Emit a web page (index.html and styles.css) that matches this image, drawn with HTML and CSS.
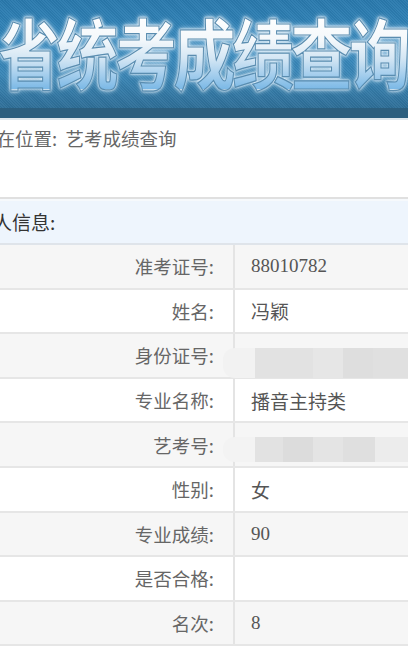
FILE: index.html
```html
<!DOCTYPE html>
<html lang="zh">
<head>
<meta charset="utf-8">
<title>省统考成绩查询</title>
<link rel="stylesheet" href="styles.css">
</head>
<body>
<div class="page">
  <header class="banner">
    <div class="title"><span class="title-text">省统考成绩查询</span></div>
  </header>
  <div class="crumb"><span class="crumb-text">所在位置:&nbsp; 艺考成绩查询</span></div>
  <div class="section-head"><span class="section-text">个人信息:</span></div>
  <div class="rows">
    <div class="row odd"><div class="label">准考证号:</div><div class="value num">88010782</div></div>
    <div class="row"><div class="label">姓名:</div><div class="value">冯颖</div></div>
    <div class="row odd"><div class="label">身份证号:</div><div class="value"><div class="mask mask-id"></div></div></div>
    <div class="row"><div class="label">专业名称:</div><div class="value">播音主持类</div></div>
    <div class="row odd"><div class="label">艺考号:</div><div class="value"><div class="mask mask-yk"></div></div></div>
    <div class="row"><div class="label">性别:</div><div class="value">女</div></div>
    <div class="row odd"><div class="label">专业成绩:</div><div class="value num">90</div></div>
    <div class="row"><div class="label">是否合格:</div><div class="value"></div></div>
    <div class="row odd"><div class="label">名次:</div><div class="value num">8</div></div>
  </div>
</div>
</body>
</html>
```
FILE: styles.css
```css
html, body {
  margin: 0;
  padding: 0;
  background: #fff;
}
.page {
  width: 408px;
  height: 647px;
  overflow: hidden;
  font-family: "Noto Sans CJK SC", "Noto Sans", sans-serif;
}
.banner {
  height: 108px;
  background:
    repeating-linear-gradient(45deg, rgba(255,255,255,0.04) 0 1px, rgba(0,0,0,0.04) 1px 2px),
    linear-gradient(180deg, #2a7aae 0%, #3588bd 45%, #3a86b6 70%, #2f6f98 100%);
  border-bottom: 10px solid #2c5f7f;
  box-shadow: 0 2px 0 #dfe8ee;
  overflow: hidden;
}
.title {
  white-space: nowrap;
  height: 108px;
  display: flex;
  align-items: center;
}
.title-text {
  display: inline-block;
  font-family: "Noto Sans CJK SC", sans-serif;
  font-weight: 700;
  font-size: 62px;
  letter-spacing: -3.5px;
  line-height: 1;
  margin-left: -2px;
  margin-top: -6px;
  transform: scale(1, 1.24);
  transform-origin: center;
  background: linear-gradient(180deg, #ffffff 0%, #f4f8fb 35%, #d3e6f4 60%, #7ab8e6 100%);
  -webkit-background-clip: text;
  background-clip: text;
  color: transparent;
  -webkit-text-stroke: 1px #5a8db0;
  filter: drop-shadow(0 0 1px #e8f3fb) drop-shadow(0 0 2px rgba(220,238,250,0.8));
}
.crumb {
  height: 81px;
  box-sizing: border-box;
  padding-top: 9px;
  border-bottom: 2px solid #e0e0e0;
}
.crumb-text {
  display: block;
  margin-left: -22px;
  font-size: 18.5px;
  line-height: 22px;
  color: #666;
  white-space: nowrap;
}
.section-head {
  background: #eef5fd;
  border-top: 2px solid #f6f9fc;
  box-sizing: border-box;
  border-bottom: 2px solid #dfe4ea;
  display: flex;
  align-items: center;
  height: 46px;
}
.section-text {
  display: block;
  margin-left: -26px;
  font-size: 19px;
  color: #333;
  white-space: nowrap;
  margin-top: -2px;
}
.rows {
  display: flex;
  flex-direction: column;
}
.row {
  display: grid;
  grid-template-columns: 235px 1fr;
  height: 44.6px;
  box-sizing: border-box;
  border-bottom: 2px solid #e6e6e6;
  background: #fff;
}
.row.odd {
  background: #f6f6f6;
}
.label {
  display: flex;
  align-items: center;
  justify-content: flex-end;
  padding-right: 19px;
  font-size: 18.5px;
  color: #666;
  border-right: 2px solid #e4e4e4;
  white-space: nowrap;
}
.value {
  position: relative;
  display: flex;
  align-items: center;
  padding-left: 16px;
  font-size: 19px;
  color: #555;
  white-space: nowrap;
}
.value.num {
  font-family: "Liberation Serif", "Noto Sans CJK SC", serif;
  font-size: 19px;
  color: #555;
}
.mask {
  position: absolute;
  left: -12px;
  right: 0;
  border-radius: 12px 0 0 12px;
  background:
    linear-gradient(90deg, transparent 0 32px, #e2e2e2 32px 90px, #e6e6e6 90px 120px, #dedede 120px 150px, #e0e0e0 150px 200px);
  background-color: #f2f2f2;
}
.mask-id {
  top: 14px;
  bottom: -1px;
}
.mask-yk {
  top: 14px;
  bottom: 4px;
  background:
    linear-gradient(90deg, transparent 0 32px, #e2e2e2 32px 60px, #dcdcdc 60px 90px, #e4e4e4 90px 120px, #dfdfdf 120px 152px, #ececec 152px 200px);
  background-color: #f3f3f3;
}
```
